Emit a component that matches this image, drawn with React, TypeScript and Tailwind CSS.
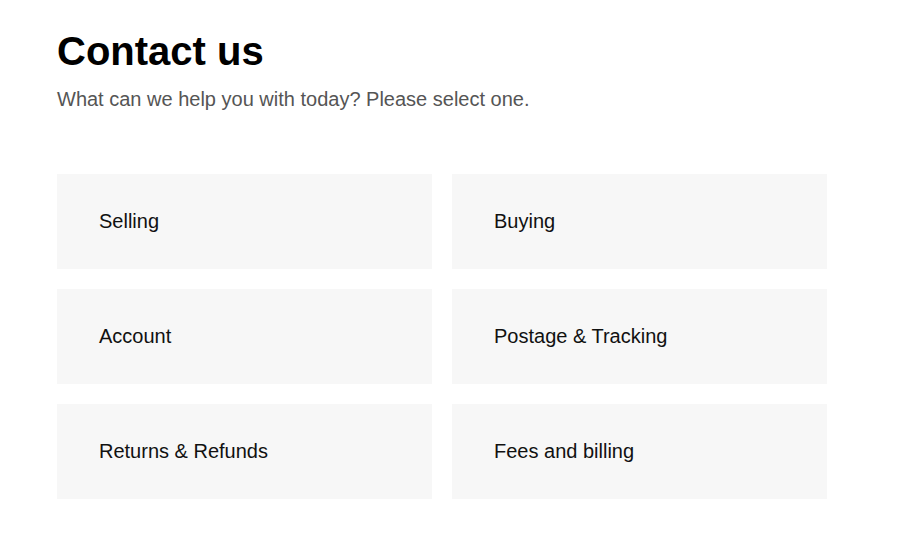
const topics = [
  "Selling",
  "Buying",
  "Account",
  "Postage & Tracking",
  "Returns & Refunds",
  "Fees and billing",
];

export default function App() {
  return (
    <div className="min-h-screen bg-white pl-[57px] pt-[27px] font-['Liberation_Sans',Arial,sans-serif]">
      <h1 className="text-[40px] font-bold leading-[48px] text-black">Contact us</h1>
      <p className="mt-[10px] text-[20px] leading-[28px] text-[#555555]">
        What can we help you with today? Please select one.
      </p>
      <div className="mt-[61px] grid w-[770px] grid-cols-2 gap-5">
        {topics.map((t) => (
          <button
            key={t}
            type="button"
            className="flex h-[95px] items-center bg-[#f7f7f7] pb-[2px] pl-[42px] text-left text-[20px] text-[#111111]"
          >
            {t}
          </button>
        ))}
      </div>
    </div>
  );
}
